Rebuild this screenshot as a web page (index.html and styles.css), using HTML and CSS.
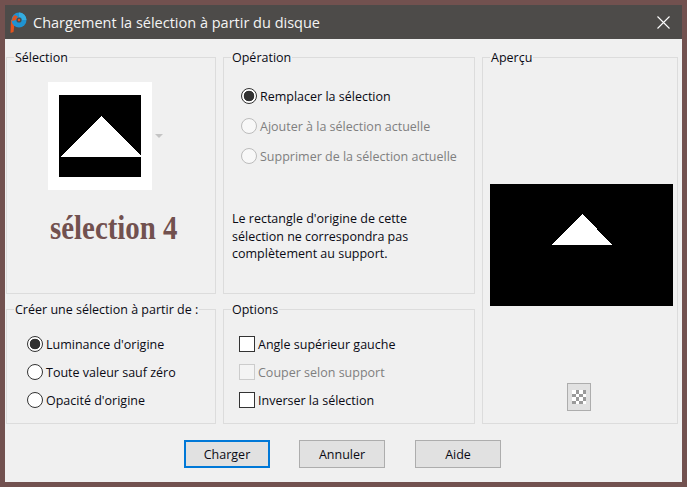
FILE: index.html
```html
<!DOCTYPE html>
<html lang="fr">
<head>
<meta charset="utf-8">
<title>Chargement la sélection à partir du disque</title>
<link rel="stylesheet" href="styles.css">
</head>
<body>
<div class="dialog">
  <header class="titlebar">
    <svg class="logo" width="18" height="22" viewBox="0 0 18 22">
      <path d="M2 8 L6 8 L4.5 20 L1.5 21 Z" fill="#e2531f"/>
      <circle cx="10" cy="8" r="7.5" fill="#1f93d2"/>
      <path d="M10 .5 A7.5 7.5 0 0 1 17.5 8 L13 8 A3 3 0 0 0 10 5 Z" fill="#35aee0"/>
      <path d="M6 3 A7 7 0 0 0 3 9 L7 8 A3 3 0 0 1 9 5 Z" fill="#e2531f"/>
      <circle cx="10" cy="8" r="2.6" fill="#4d4b49"/>
      <circle cx="10" cy="8" r="1.2" fill="#e2531f"/>
    </svg>
    <h1 class="title">Chargement la sélection à partir du disque</h1>
    <svg class="close" width="13" height="13" viewBox="0 0 13 13"><path d="M.5 .5 L12.5 12.5 M12.5 .5 L.5 12.5" stroke="#fff" stroke-width="1.1" fill="none"/></svg>
  </header>
  <main class="content">
    <div class="groups">
      <fieldset class="group group-selection">
        <legend>Sélection</legend>
        <div class="body body-selection">
          <div class="thumb-row">
            <div class="thumb">
              <svg width="82" height="82" viewBox="0 0 82 82" shape-rendering="crispEdges">
                <rect width="82" height="82" fill="#000"/>
                <polygon points="43,21 83,62 1,62" fill="#fff"/>
              </svg>
            </div>
            <span class="thumb-arrow"></span>
          </div>
          <div class="sel-name">sélection 4</div>
        </div>
      </fieldset>
      <fieldset class="group group-operation">
        <legend>Opération</legend>
        <div class="body body-operation">
          <label class="row row-op"><span class="radio radio-on"></span>Remplacer la sélection</label>
          <label class="row row-op off"><span class="radio"></span>Ajouter à la sélection actuelle</label>
          <label class="row row-op off"><span class="radio"></span>Supprimer de la sélection actuelle</label>
          <p class="note">Le rectangle d'origine de cette<br>sélection ne correspondra pas<br>complètement au support.</p>
        </div>
      </fieldset>
      <fieldset class="group group-preview">
        <legend>Aperçu</legend>
        <div class="preview">
          <svg width="183" height="122" viewBox="0 0 183 122" shape-rendering="crispEdges">
            <rect width="183" height="122" fill="#000"/>
            <polygon points="92.5,30 122.5,61 62,61" fill="#fff"/>
          </svg>
        </div>
        <button class="swatch" type="button" aria-label="Transparence">
          <svg width="14" height="14" viewBox="0 0 14 14" shape-rendering="crispEdges">
            <rect width="14" height="14" fill="#fff"/>
            <path d="M4 0h3v4H4zM11 0h3v4h-3zM0 4h4v3H0zM7 4h4v3H7zM4 7h3v4H4zM11 7h3v4h-3zM0 11h4v3H0zM7 11h4v3H7z" fill="#9a9a9a"/>
          </svg>
        </button>
      </fieldset>
      <fieldset class="group group-create">
        <legend>Créer une sélection à partir de :</legend>
        <div class="body body-create">
          <label class="row"><span class="radio radio-on"></span>Luminance d'origine</label>
          <label class="row"><span class="radio"></span>Toute valeur sauf zéro</label>
          <label class="row"><span class="radio"></span>Opacité d'origine</label>
        </div>
      </fieldset>
      <fieldset class="group group-options">
        <legend>Options</legend>
        <div class="body body-options">
          <label class="row"><span class="check"></span>Angle supérieur gauche</label>
          <label class="row off"><span class="check"></span>Couper selon support</label>
          <label class="row"><span class="check"></span>Inverser la sélection</label>
        </div>
      </fieldset>
    </div>
    <div class="actions">
      <button class="btn btn-default" type="button">Charger</button>
      <button class="btn" type="button">Annuler</button>
      <button class="btn" type="button">Aide</button>
    </div>
  </main>
</div>
</body>
</html>
```
FILE: styles.css
```css
* { box-sizing: border-box; }
html, body { margin: 0; height: 100%; }
body {
  background: #72514f;
  font-family: "Open Sans", "Noto Sans", sans-serif;
  font-size: 12.5px;
  color: #0a0a14;
}
.dialog {
  width: 687px;
  height: 487px;
  padding: 5px;
  display: flex;
  flex-direction: column;
}
.titlebar {
  height: 34px;
  flex: none;
  background: #4d4b49;
  display: flex;
  align-items: center;
  padding-left: 4px;
}
.logo { flex: none; margin-top: 2px; }
.title {
  margin: 0 0 0 6px;
  flex: 1;
  font-size: 14.5px;
  font-weight: 400;
  color: #f4f4f4;
  white-space: nowrap;
}
.close { flex: none; margin-right: 12px; margin-top: 1px; }
.content {
  flex: 1;
  background: #f0f0f0;
  padding: 10px 4px 0 1px;
  display: flex;
  flex-direction: column;
}
.groups {
  display: grid;
  grid-template-columns: 210px 252px 196px;
  grid-template-rows: 245px 123px;
  column-gap: 7px;
  row-gap: 7px;
}
.group {
  margin: 0;
  min-width: 0;
  border: 1px solid #dcdcdc;
  padding: 0;
}
.group legend {
  margin-left: 7px;
  padding: 0 1px;
  height: 16px;
  line-height: 18px;
  white-space: nowrap;
}
.group-preview { grid-row: 1 / span 2; grid-column: 3; display: flex; flex-direction: column; }
.group-create { grid-column: 1; grid-row: 2; }
.group-options { grid-column: 2; grid-row: 2; }
.body-create { padding: 13px 0 0 20px; }
.body-options { padding: 13px 0 0 15px; }
.body-selection { padding: 17px 0 0 41px; }
.body-operation { padding: 16px 0 0 17px; }
.thumb-row { display: flex; align-items: center; }
.thumb {
  width: 104px;
  height: 108px;
  background: #fff;
  padding: 13px 11px;
}
.thumb svg { display: block; }
.thumb-arrow {
  margin-left: 3px;
  border-left: 4px solid transparent;
  border-right: 4px solid transparent;
  border-top: 4px solid #c4c4c4;
}
.sel-name {
  margin: 20px 0 0 2px;
  white-space: nowrap;
  font-family: "Liberation Serif", serif;
  font-weight: 700;
  font-size: 33px;
  line-height: 36px;
  color: #72514f;
  transform: scaleX(.875);
  transform-origin: left center;
}
.row {
  display: flex;
  align-items: center;
  height: 28px;
  white-space: nowrap;
}
.row-op { height: 30px; }
.off { color: #7f7f7f; }
.radio {
  flex: none;
  width: 16px;
  height: 16px;
  margin-right: 3px;
  border: 1.5px solid #333;
  border-radius: 50%;
  background: #fff;
}
.off .radio { border-color: #bcbcbc; background: #f8f8f8; }
.radio-on {
  background: radial-gradient(circle, #333 0 5px, #fff 5.6px);
}
.check {
  flex: none;
  width: 16px;
  height: 16px;
  margin-right: 3px;
  border: 1px solid #333;
  background: #fff;
}
.off .check { border-color: #ccc; background: #f4f4f4; }
.note {
  margin: 39px 0 0 -9px;
  line-height: 17.5px;
}
.preview { margin: 119px 0 0 7px; }
.preview svg { display: block; }
.swatch {
  margin: 77px 0 0 84px;
  width: 24px;
  height: 28px;
  padding: 0;
  background: #e1e1e1;
  border: 1px solid #adadad;
  display: flex;
  align-items: center;
  justify-content: center;
}
.actions {
  display: flex;
  margin: 16px 0 0 178px;
}
.btn {
  width: 86px;
  height: 28px;
  margin-right: 29px;
  padding: 0;
  background: #e1e1e1;
  border: 1px solid #adadad;
  font: inherit;
  color: inherit;
}
.btn:last-child { margin-left: 1px; }
.btn-default { border: 2px solid #0078d7; }
```
